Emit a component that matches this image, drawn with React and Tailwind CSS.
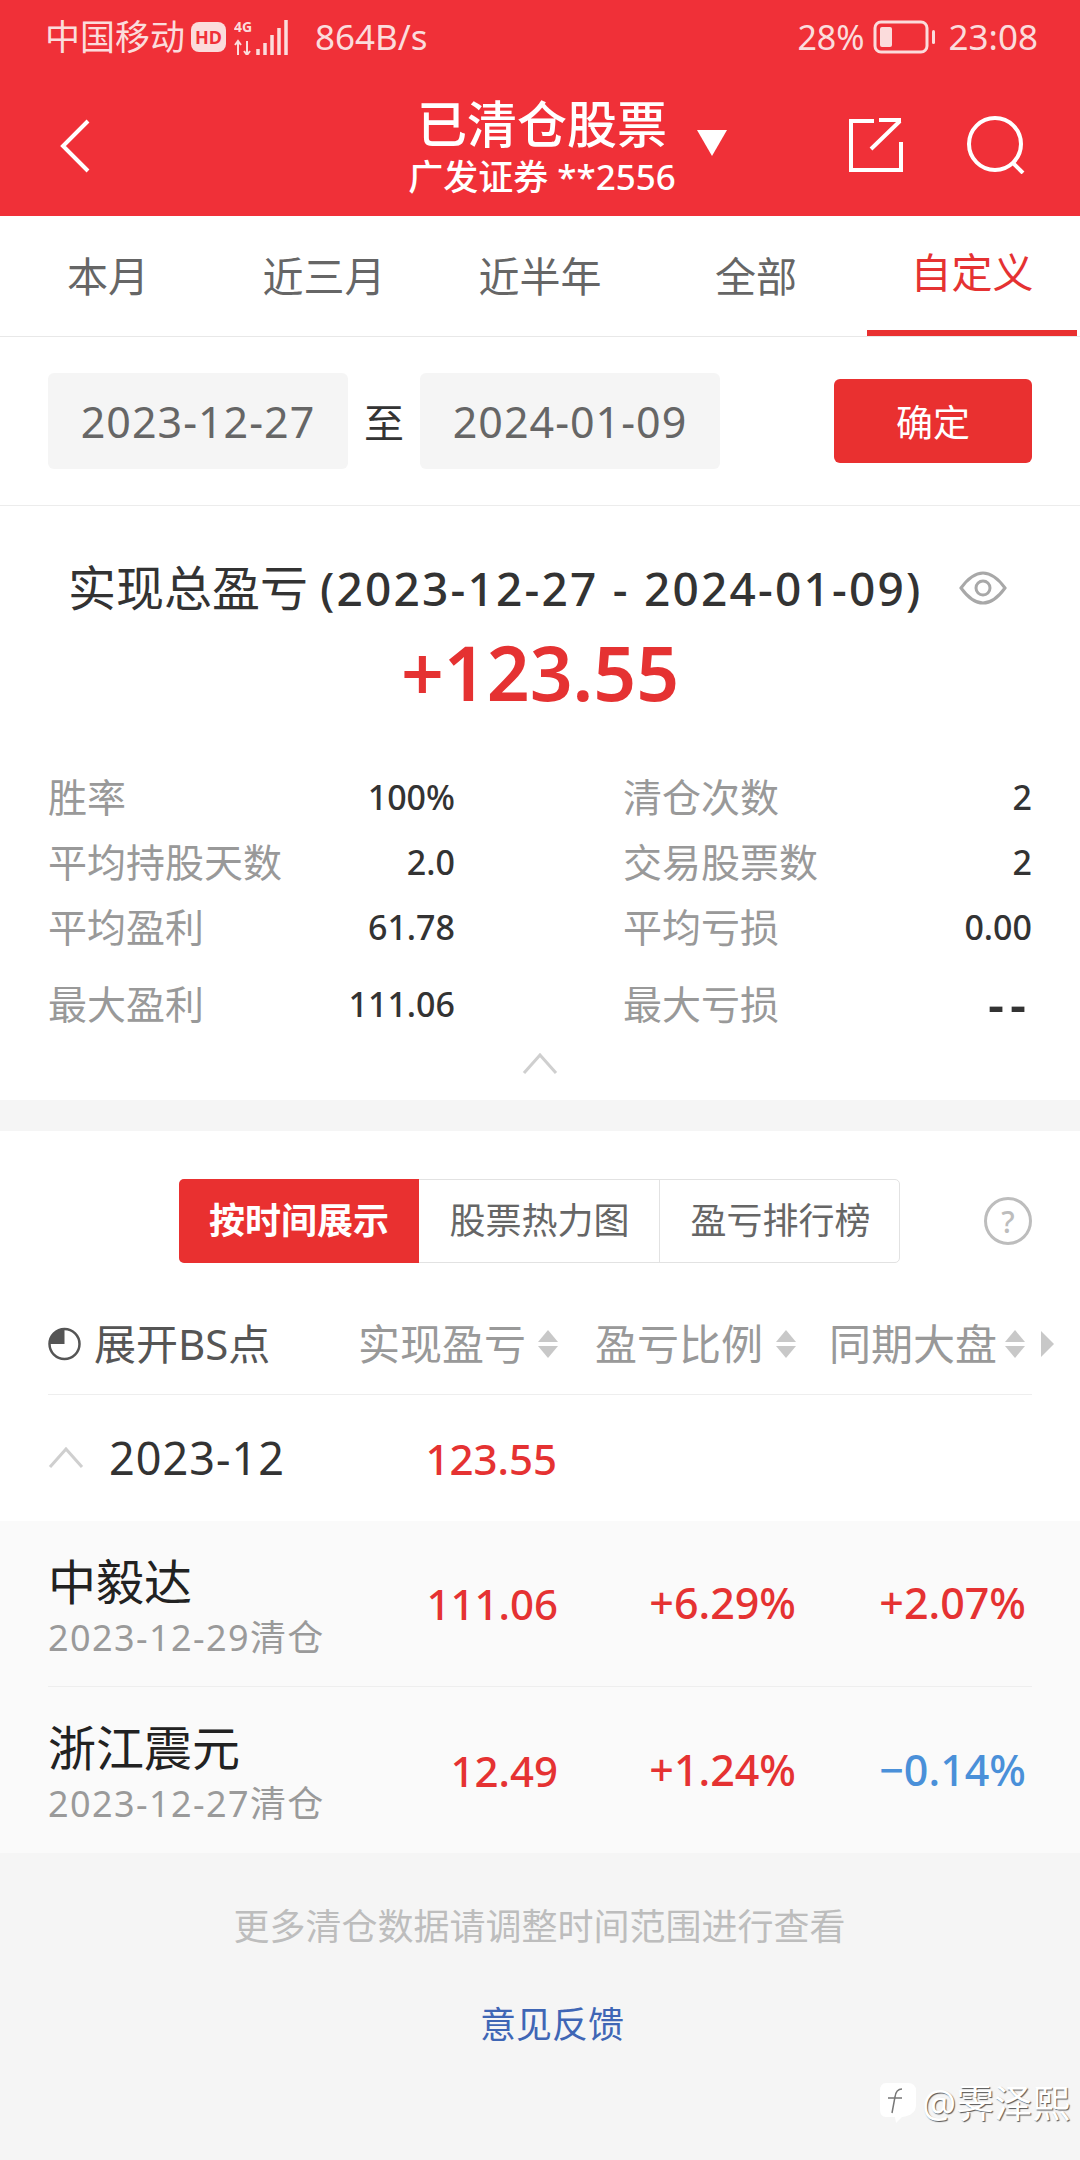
import React from "react";

const font = { fontFamily: '"Noto Sans", "Noto Sans CJK SC", sans-serif' };

const tabs = ["本月", "近三月", "近半年", "全部", "自定义"];

const stats = [
  ["胜率", "100%", "清仓次数", "2"],
  ["平均持股天数", "2.0", "交易股票数", "2"],
  ["平均盈利", "61.78", "平均亏损", "0.00"],
  ["最大盈利", "111.06", "最大亏损", "--"],
];

function SortArrows() {
  return (
    <svg width="22" height="30" viewBox="0 0 22 30" className="shrink-0">
      <path d="M11 1 L21 13 L1 13 Z" fill="#c8c8c8" />
      <path d="M11 29 L21 17 L1 17 Z" fill="#c8c8c8" />
    </svg>
  );
}

function UpChevron() {
  return (
    <svg width="36" height="44" viewBox="0 0 36 44" fill="none" stroke="#cfcfcf" strokeWidth="3" className="shrink-0">
      <path d="M2 31 L18 13 L34 31" />
    </svg>
  );
}

function StockRow({ name, date, profit, ratio, market, marketColor, border }) {
  return (
    <div className={`mx-[48px] h-[166px] flex items-center ${border ? "border-b border-[#eeeeee]" : ""}`}>
      <div className="w-[300px] mt-[12px]">
        <div className="text-[48px] leading-[56px] text-[#222222]">{name}</div>
        <div className="text-[36px] leading-[56px] tracking-[1.4px] text-[#9a9a9a] whitespace-nowrap">{date}</div>
      </div>
      <div className="w-[210px] text-right text-[42px] font-medium text-[#e53232]">{profit}</div>
      <div className="w-[238px] text-right text-[43px] font-medium text-[#e53232]">{ratio}</div>
      <div className={`w-[230px] text-right text-[43px] font-medium ${marketColor}`}>{market}</div>
    </div>
  );
}

export default function App() {
  return (
    <div style={font} className="w-[1080px] h-[2160px] bg-white overflow-hidden">
      <div className="h-[216px] bg-[#f03038] text-white">
        <div className="h-[74px] flex items-center justify-between pl-[45px] pr-[42px] text-[35px] text-[#fbdcdc]">
          <div className="flex items-center">
            <span>中国移动</span>
            <span className="ml-[6px] w-[35px] h-[30px] rounded-[8px] bg-[#fbdcdc] text-[#f03038] text-[18px] leading-none font-bold flex items-center justify-center">HD</span>
            <svg width="55" height="36" viewBox="0 0 55 36" className="ml-[8px]">
              <text x="0" y="13" fontSize="14" fontWeight="700" fill="#fbdcdc">4G</text>
              <path d="M4 22v14M1 26l3-4 3 4M13 22v14M10 32l3 4 3-4" fill="none" stroke="#fbdcdc" strokeWidth="2" />
              <path d="M24 30v6M31 24v12M38 16v20M45 9v27M52 1v35" stroke="#fbdcdc" strokeWidth="3.5" />
            </svg>
            <span className="ml-[26px]">864B/s</span>
          </div>
          <div className="flex items-center">
            <span className="text-[34px]">28%</span>
            <svg width="64" height="34" viewBox="0 0 64 34" className="ml-[8px]">
              <rect x="2" y="2" width="52" height="30" rx="6" fill="none" stroke="#fbdcdc" strokeWidth="3" />
              <rect x="7" y="7" width="12" height="20" rx="2" fill="#fbdcdc" />
              <rect x="59" y="10" width="3" height="14" rx="1.5" fill="#fbdcdc" />
            </svg>
            <span className="ml-[12px]">23:08</span>
          </div>
        </div>
        <div className="h-[142px] flex items-center pl-[60px]">
          <svg width="30" height="54" viewBox="0 0 30 54" fill="none" stroke="#ffffff" strokeWidth="4" className="shrink-0 mt-[2px]">
            <path d="M28 2 L3 27 L28 52" />
          </svg>
          <div className="ml-[302px] w-[300px] mt-[3px] flex flex-col items-center">
            <div className="text-[50px] leading-[60px] font-medium whitespace-nowrap">已清仓股票</div>
            <div className="text-[35px] leading-[46px] font-medium whitespace-nowrap">广发证券 **2556</div>
          </div>
          <svg width="30" height="26" viewBox="0 0 30 26" className="ml-[5px] mb-[4px] shrink-0">
            <path d="M0 0 H30 L15 26 Z" fill="#ffffff" />
          </svg>
          <svg width="54" height="54" viewBox="0 0 54 54" fill="none" stroke="#ffffff" strokeWidth="4" className="ml-[122px] shrink-0">
            <path d="M25 3 H2 V52 H52 V24" />
            <path d="M22 31 L51 3 M30 2 H52" />
          </svg>
          <svg width="60" height="58" viewBox="0 0 60 58" fill="none" stroke="#ffffff" strokeWidth="4" className="ml-[63px] shrink-0">
            <circle cx="29" cy="28" r="26" />
            <path d="M46 46 L57 57" />
          </svg>
        </div>
      </div>

      <div className="h-[121px] grid grid-cols-5 border-b border-[#e8e8e8] text-[41px]">
        {tabs.map((t, i) => (
          <div
            key={t}
            className={
              i === 4
                ? "ml-[3px] mr-[3px] flex items-center justify-center border-b-[6px] border-[#e93030] text-[#e53232]"
                : "pt-[8px] flex items-center justify-center border-b-[6px] border-transparent text-[#666666]"
            }
          >
            {t}
          </div>
        ))}
      </div>

      <div className="h-[169px] flex items-center pl-[48px] pr-[48px] border-b border-[#ececec]">
        <div className="w-[300px] h-[96px] pt-[3px] rounded-[6px] bg-[#f5f5f5] flex items-center justify-center text-[43px] tracking-[1px] text-[#666666]">2023-12-27</div>
        <div className="w-[72px] pt-[3px] text-center text-[40px] text-[#333333]">至</div>
        <div className="w-[300px] h-[96px] pt-[3px] rounded-[6px] bg-[#f5f5f5] flex items-center justify-center text-[43px] tracking-[1px] text-[#666666]">2024-01-09</div>
        <div className="ml-auto w-[198px] h-[84px] pt-[3px] rounded-[6px] bg-[#e93030] text-white flex items-center justify-center text-[37px]">确定</div>
      </div>

      <div className="h-[594px] px-[48px]">
        <div className="h-[116px] pt-[48px] pl-[20px] flex items-center text-[#333333] whitespace-nowrap">
          <span className="text-[48px]">实现总盈亏</span>
          <span className="ml-[12px] text-[46px] font-medium tracking-[2.2px]">(2023-12-27 - 2024-01-09)</span>
          <svg width="48" height="34" viewBox="0 0 48 34" fill="none" stroke="#a8a8a8" strokeWidth="3" className="ml-[37px] shrink-0">
            <path d="M2 17 C10 6 17 2 24 2 C31 2 38 6 46 17 C38 28 31 32 24 32 C17 32 10 28 2 17 Z" />
            <circle cx="24" cy="17" r="7" />
          </svg>
        </div>
        <div className="mt-[4px] h-[92px] flex items-center justify-center text-[75px] font-semibold text-[#e53232]">+123.55</div>
        <div className="mt-[47px] flex flex-col">
          {stats.map((r, i) => (
            <div key={r[0]} className={`flex items-center ${i === 3 ? "h-[76px] mt-[6px]" : "h-[65px]"}`}>
              <span className="w-[300px] text-[39px] text-[#999999] whitespace-nowrap">{r[0]}</span>
              <span className="w-[107px] text-right text-[34px] font-medium text-[#333333]">{r[1]}</span>
              <span className="ml-[168px] w-[220px] text-[39px] text-[#999999] whitespace-nowrap">{r[2]}</span>
              {r[3] === "--" ? (
                <span className="w-[189px] text-right text-[50px] leading-[44px] tracking-[6px] mr-[-10px] font-semibold text-[#333333]">{r[3]}</span>
              ) : (
                <span className="w-[189px] text-right text-[34px] font-medium text-[#333333]">{r[3]}</span>
              )}
            </div>
          ))}
        </div>
        <div className="flex justify-center">
          <UpChevron />
        </div>
      </div>

      <div className="h-[31px] bg-[#f5f5f5]" />

      <div className="h-[264px] px-[48px]">
        <div className="pt-[48px] flex items-center">
          <div className="ml-[131px] w-[721px] h-[84px] flex rounded-[5px] border border-[#e2e2e2] text-[36px] text-[#666666]">
            <div className="w-[240px] m-[-1px] rounded-l-[5px] bg-[#e93030] text-white font-bold flex items-center justify-center">按时间展示</div>
            <div className="w-[242px] pl-[2px] border-r border-[#e2e2e2] flex items-center justify-center">股票热力图</div>
            <div className="flex-1 pl-[2px] flex items-center justify-center">盈亏排行榜</div>
          </div>
          <div className="ml-[84px] w-[48px] h-[48px] rounded-full border-[3px] border-[#bdbdbd] text-[#bdbdbd] text-[30px] font-medium flex items-center justify-center">?</div>
        </div>
        <div className="mt-[30px] h-[102px] flex items-center border-b border-[#eeeeee] text-[42px] text-[#999999] whitespace-nowrap">
          <svg width="33" height="34" viewBox="0 0 33 34" fill="none" className="shrink-0">
            <circle cx="16.5" cy="17" r="15" stroke="#555555" strokeWidth="2.5" />
            <path d="M16.5 2 A15 15 0 0 0 1.5 17 H16.5 Z" fill="#555555" />
          </svg>
          <span className="ml-[13px] w-[264px] shrink-0 text-[#555555]">展开BS点</span>
          <span className="w-[168px] shrink-0">实现盈亏</span>
          <span className="ml-[11px] shrink-0"><SortArrows /></span>
          <span className="ml-[36px] w-[168px] shrink-0">盈亏比例</span>
          <span className="ml-[12px] shrink-0"><SortArrows /></span>
          <span className="ml-[32px] w-[164px] shrink-0">同期大盘</span>
          <span className="ml-[11px] shrink-0"><SortArrows /></span>
          <svg width="13" height="26" viewBox="0 0 13 26" className="ml-[15px] shrink-0">
            <path d="M0 0 L13 13 L0 26 Z" fill="#c8c8c8" />
          </svg>
        </div>
      </div>

      <div className="h-[126px] mx-[48px] flex items-center">
        <UpChevron />
        <span className="ml-[25px] w-[236px] text-[45px] tracking-[1px] text-[#333333]">2023-12</span>
        <span className="w-[212px] text-right text-[42px] font-medium text-[#e53232]">123.55</span>
      </div>

      <div className="bg-[#fafafa]">
        <StockRow name="中毅达" date="2023-12-29清仓" profit="111.06" ratio="+6.29%" market="+2.07%" marketColor="text-[#e53232]" border />
        <StockRow name="浙江震元" date="2023-12-27清仓" profit="12.49" ratio="+1.24%" market="−0.14%" marketColor="text-[#4a90d9]" />
      </div>

      <div className="h-[308px] bg-[#f5f5f5] relative pt-[47px] flex flex-col items-center text-[36px]">
        <div className="text-[#bdbdbd] ml-[-1px]">更多清仓数据请调整时间范围进行查看</div>
        <div className="mt-[44px] ml-[24px] text-[#3f66b5]">意见反馈</div>
        <div className="absolute left-[878px] top-[221px] flex items-center text-[38px] text-white whitespace-nowrap [text-shadow:1px_1px_1px_#555555]">
          <svg width="40" height="44" viewBox="0 0 40 44" className="mr-[4px]">
            <path d="M8 2 H30 Q38 2 38 10 V24 Q38 34 24 36 L18 42 L17 36 H8 Q2 36 2 28 V10 Q2 2 8 2 Z" fill="#ffffff" />
            <path d="M24 8 Q18 8 17 16 L14 32 M10 17 H24" fill="none" stroke="#777777" strokeWidth="1.5" />
          </svg>
          <span>@霁泽熙</span>
        </div>
      </div>
    </div>
  );
}
